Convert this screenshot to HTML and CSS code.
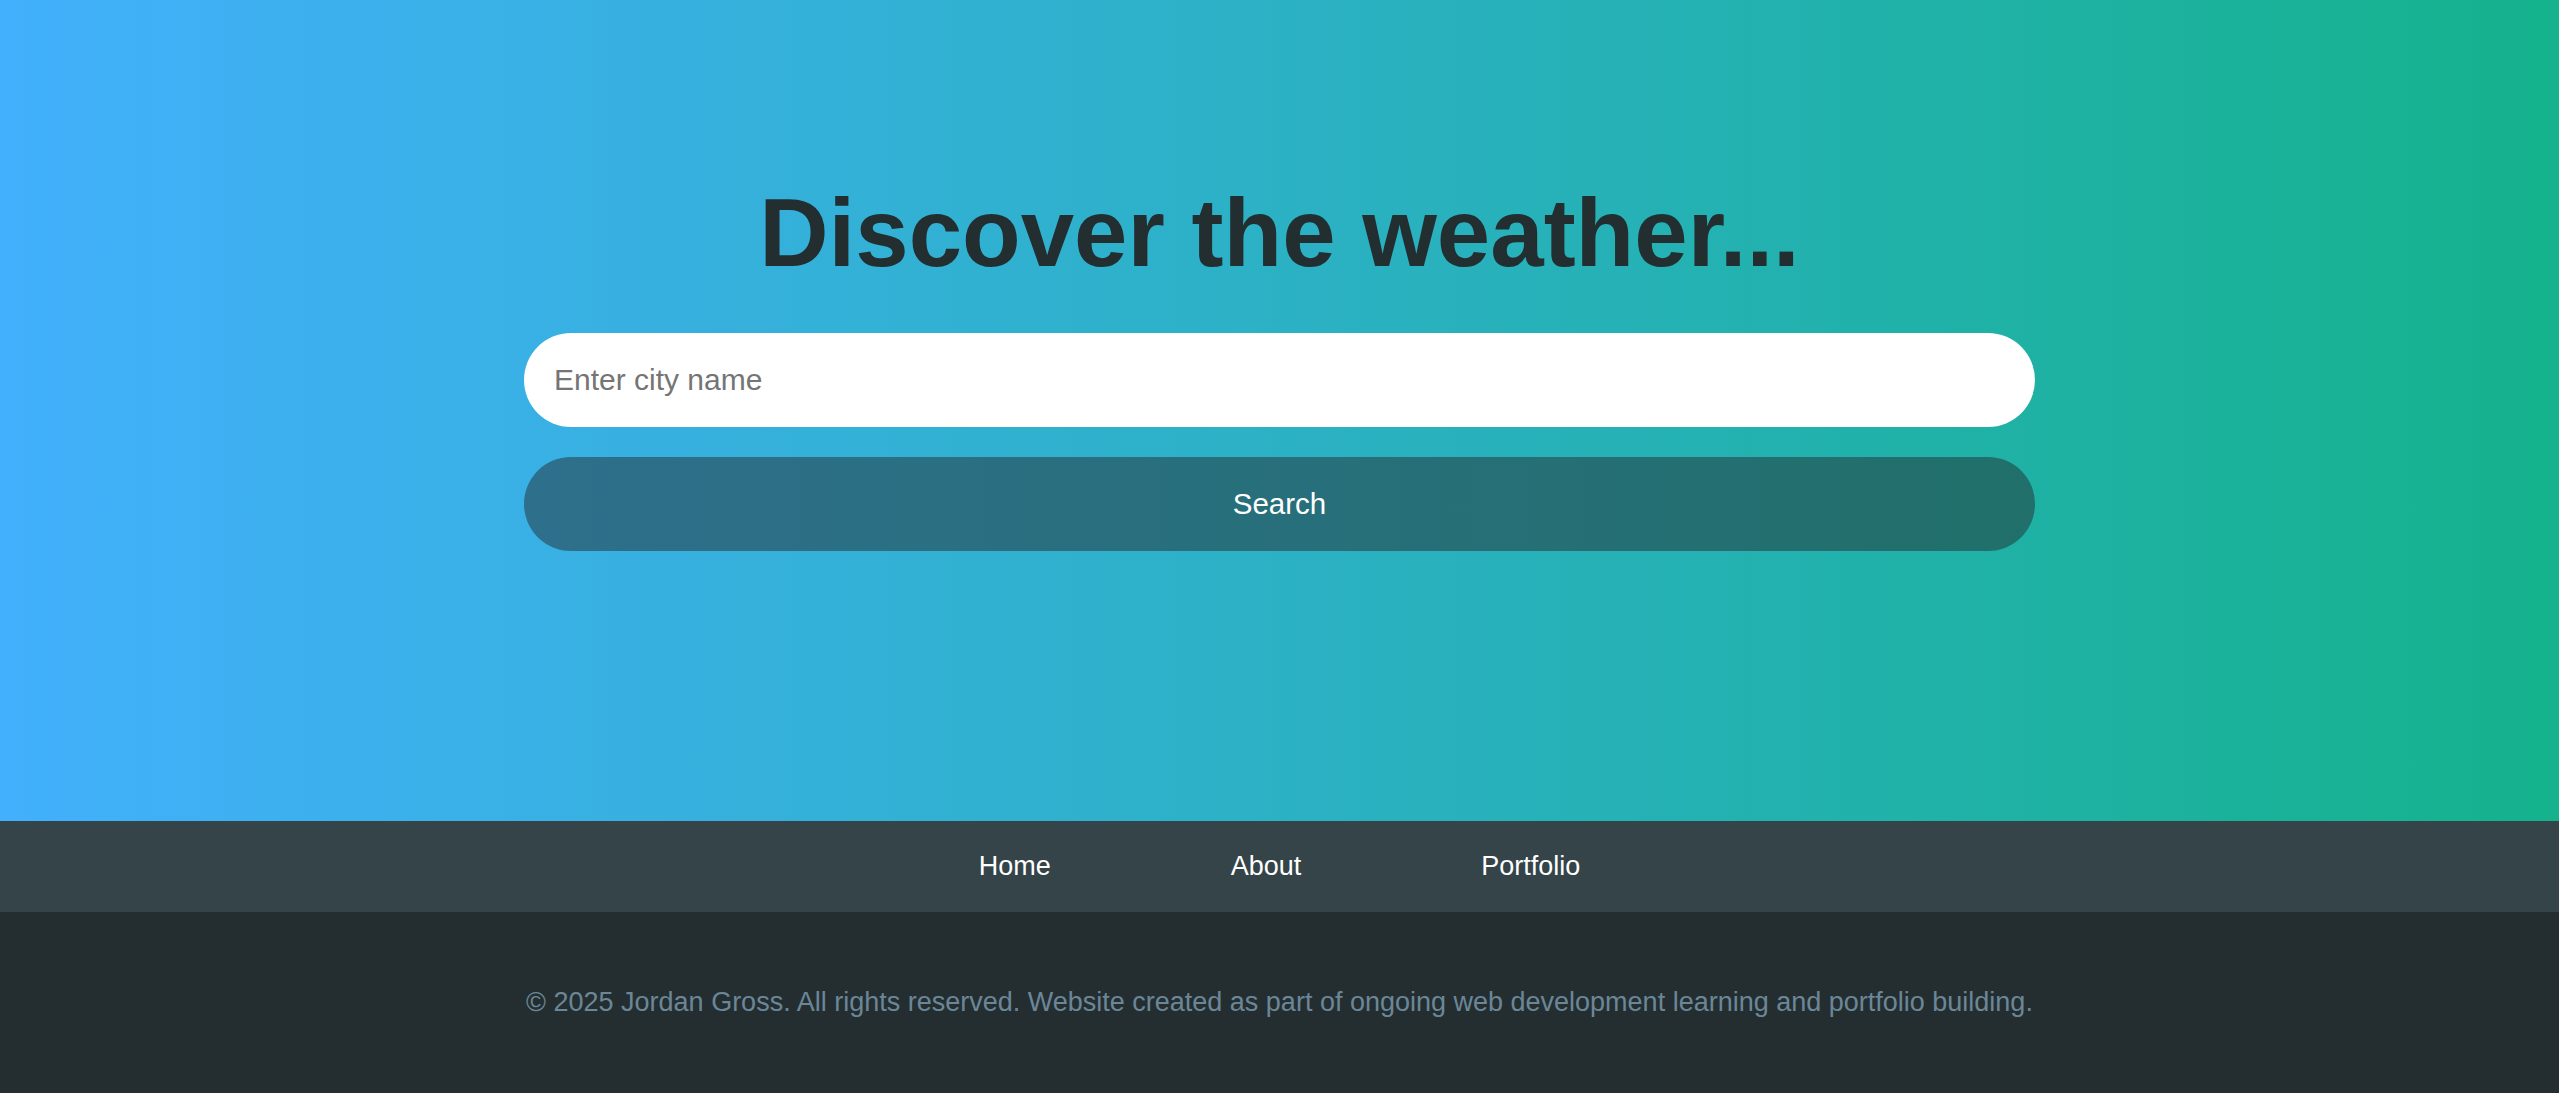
FILE: index.html
```html
<!DOCTYPE html>
<html lang="en">
<head>
<meta charset="utf-8">
<title>Weather</title>
<link rel="stylesheet" href="styles.css">
</head>
<body>
<main class="hero">
  <div class="container">
    <h1 class="title">Discover the weather...</h1>
    <form class="search-form" onsubmit="return false;">
      <input class="city-input" type="text" placeholder="Enter city name">
      <button class="search-btn" type="submit">Search</button>
    </form>
  </div>
</main>
<nav class="nav">
  <a class="nav-link" href="#">Home</a>
  <a class="nav-link" href="#">About</a>
  <a class="nav-link" href="#">Portfolio</a>
</nav>
<footer class="footer">
  <p class="footer-text">© 2025 Jordan Gross. All rights reserved. Website created as part of ongoing web development learning and portfolio building.</p>
</footer>
</body>
</html>
```
FILE: styles.css
```css
* { box-sizing: border-box; }
html, body { margin: 0; padding: 0; }
body {
  font-family: "Liberation Sans", Arial, sans-serif;
  background: #242e31;
}
.hero {
  height: 821px;
  background: linear-gradient(to right, #42b0fc, #15b28d);
  padding-top: 178px;
}
.container {
  width: 1511px;
  margin: 0 auto;
}
.title {
  margin: 0 0 45px;
  font-size: 96px;
  font-weight: 700;
  color: #232e30;
  text-align: center;
  line-height: normal;
}
.search-form {
  display: flex;
  flex-direction: column;
  gap: 30px;
}
.city-input {
  height: 94px;
  border: none;
  border-radius: 47px;
  background: #fff;
  padding: 0 30px;
  font-family: "Liberation Sans", Arial, sans-serif;
  font-size: 30px;
  color: #232e30;
  outline: none;
}
.city-input::placeholder { color: #757575; }
.search-btn {
  height: 94px;
  border: none;
  border-radius: 47px;
  background: rgba(36, 46, 49, 0.5);
  color: #fff;
  font-family: "Liberation Sans", Arial, sans-serif;
  font-size: 29.5px;
  cursor: pointer;
}
.nav {
  height: 91px;
  background: #354449;
  display: flex;
  justify-content: center;
  align-items: center;
  gap: 180px;
}
.nav-link {
  color: #fff;
  text-decoration: none;
  font-size: 27px;
}
.footer {
  height: 181px;
  background: #242e31;
  display: flex;
  align-items: center;
  justify-content: center;
}
.footer-text {
  margin: 0;
  color: #6b8797;
  font-size: 27px;
  text-align: center;
}
```
